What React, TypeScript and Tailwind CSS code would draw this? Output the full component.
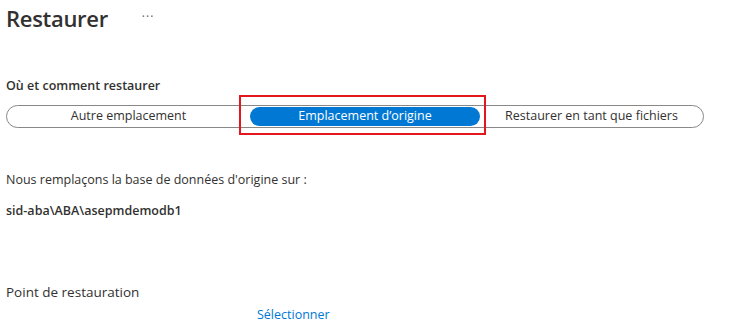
import React from "react";

const options = [
  { label: "Autre emplacement", width: "w-[243px]" },
  { label: "Emplacement d\u2019origine", width: "w-[230px]", active: true },
  { label: "Restaurer en tant que fichiers", width: "flex-1" },
];

const App = () => {
  return (
    <div className="h-[335px] w-[729px] overflow-hidden bg-white px-[6px] font-['Open_Sans',sans-serif] text-[#323130]">
      {/* header */}
      <div className="flex h-[36px] items-center">
        <h1 className="text-[22px] font-semibold leading-none tracking-[-0.3px]">Restaurer</h1>
        <span className="ml-[34px] mt-[-2px] text-[12px] tracking-[1px] text-[#605e5c]">···</span>
      </div>

      <div className="mt-[42px] text-[12.5px] font-semibold leading-[16px]">Où et comment restaurer</div>

      {/* segmented choice */}
      <div className="relative mt-[11px] flex h-[23px] w-[698px] items-center rounded-full border border-[#8a8886]">
        {options.map((o) =>
          o.active ? (
            <div
              key={o.label}
              className={`${o.width} flex h-[19px] items-center justify-center rounded-full bg-[#0078d4] text-[12.5px] text-white`}
            >
              {o.label}
            </div>
          ) : (
            <div key={o.label} className={`${o.width} flex h-full items-center justify-center text-[12.5px]`}>
              {o.label}
            </div>
          )
        )}
        <div className="pointer-events-none absolute left-[232px] top-[-11px] h-[40px] w-[247px] border-2 border-[#e3171d]" />
      </div>

      <p className="mt-[44px] text-[12.5px] leading-[16px]">Nous remplaçons la base de données d'origine sur :</p>
      <p className="mt-[15px] text-[12.5px] font-semibold leading-[16px]">sid-aba\ABA\asepmdemodb1</p>

      <div className="mt-[64px] text-[13.5px] leading-[18px]">Point de restauration</div>
      <div className="mt-[6px] pl-[251px] text-[12.5px] leading-[16px] text-[#0078d4]">Sélectionner</div>
    </div>
  );
};

export default App;
